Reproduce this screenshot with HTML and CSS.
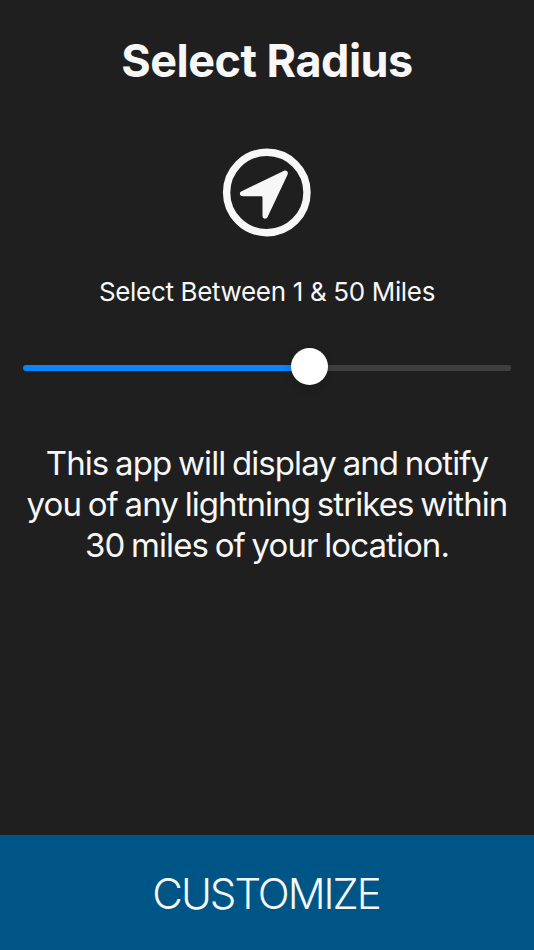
FILE: index.html
```
<!DOCTYPE html>
<html lang="en">

<head>
    <meta charset="UTF-8">
    <meta name="viewport" content="width=device-width, initial-scale=1.0">
    <title>Select Radius</title>
    <link rel="stylesheet" href="styles.css">
</head>

<body>
    <main class="content">
        <h1 class="title">Select Radius</h1>
        <svg class="location" viewBox="0 0 88 88" aria-hidden="true">
            <circle cx="43.8" cy="43.5" r="40.2" fill="none" stroke="#f7f7f7" stroke-width="7.4" />
            <path d="M18.6 42.3 L60.6 22 C63.5 20.7 65.7 22.8 64.5 25.8 L44.7 67.8 C43.2 71 39.5 70 39.5 66.8 V48.3 Q39.5 47.2 38.4 47.2 H20 C16.5 47.2 15.8 43.7 18.6 42.3Z" fill="#f7f7f7" />
        </svg>
        <p class="range-label">Select Between 1 &amp; 50 Miles</p>
        <!-- Radius slider -->
        <div class="slider">
            <div class="slider-fill"></div>
            <div class="slider-thumb"></div>
            <div class="slider-rest"></div>
        </div>
        <p class="description">
            <span>This app will display and notify</span><br>
            <span>you of any lightning strikes within</span><br>
            <span>30 miles of your location.</span>
        </p>
    </main>
    <button class="customize">CUSTOMIZE</button>
</body>

</html>
```
FILE: styles.css
```
* {
    box-sizing: border-box;
}

body {
    margin: 0;
    height: 950px;
    display: flex;
    flex-direction: column;
    background-color: #1f1f1f;
    color: #f7f7f7;
    font-family: Inter, sans-serif;
    text-align: center;
    white-space: nowrap;
}

.content {
    flex: 1;
    display: flex;
    flex-direction: column;
    align-items: center;
}

.title {
    margin: 33px 0 0;
    font-size: 45px;
    line-height: 56px;
    letter-spacing: -0.5px;
    font-weight: 700;
}

.location {
    width: 88px;
    height: 88px;
    margin-top: 60px;
    overflow: visible;
}

.range-label {
    margin: 38px 0 0;
    font-size: 26px;
    line-height: 34px;
    letter-spacing: -0.34px;
}

.slider {
    display: flex;
    align-items: center;
    width: 488px;
    height: 38px;
    margin-top: 38px;
}

.slider-fill {
    width: 270px;
    height: 6px;
    margin-top: 3px;
    border-radius: 3px 0 0 3px;
    background-color: #0a84ff;
}

.slider-thumb {
    width: 37px;
    height: 37px;
    margin: 0 -2px;
    border-radius: 50%;
    background-color: #fff;
    box-shadow: 0 3px 8px rgba(0, 0, 0, 0.15);
    z-index: 1;
}

.slider-rest {
    flex: 1;
    height: 6px;
    margin-top: 3px;
    border-radius: 0 3px 3px 0;
    background-color: #3f3f41;
}

.description {
    margin: 58px 0 0;
    font-size: 33px;
    line-height: 41px;
    letter-spacing: -0.93px;
    word-spacing: -1.6px;
}

.customize {
    height: 115px;
    padding: 1px 2px 0 0;
    border: none;
    background-color: #005587;
    color: #f7f7f7;
    font-family: Inter, sans-serif;
    font-size: 42px;
    font-weight: 300;
    letter-spacing: -2px;
}
```
